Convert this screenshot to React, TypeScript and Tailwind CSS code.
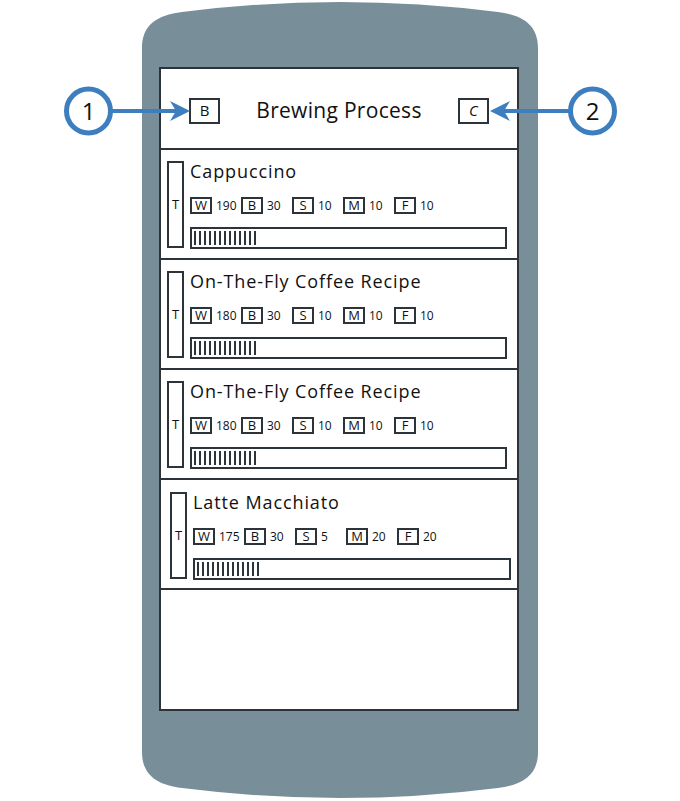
import React from "react";

type Recipe = {
  name: string;
  w: number;
  b: number;
  s: number;
  m: number;
  f: number;
};

const recipes: Recipe[] = [
  { name: "Cappuccino", w: 190, b: 30, s: 10, m: 10, f: 10 },
  { name: "On-The-Fly Coffee Recipe", w: 180, b: 30, s: 10, m: 10, f: 10 },
  { name: "On-The-Fly Coffee Recipe", w: 180, b: 30, s: 10, m: 10, f: 10 },
  { name: "Latte Macchiato", w: 175, b: 30, s: 5, m: 20, f: 20 },
];

const FONT = { fontFamily: '"Open Sans", "DejaVu Sans", sans-serif' };

function Chip({ label, value }: { label: string; value: number }) {
  return (
    <div className="flex w-[51px] items-center">
      <div className="flex h-[17px] w-[22px] items-center justify-center border-2 border-[#2c3439] text-[13px] leading-none text-[#111]">
        {label}
      </div>
      <span className="ml-[4px] text-[12px] leading-none text-[#111]">{value}</span>
    </div>
  );
}

function Row({ r, shift }: { r: Recipe; shift: boolean }) {
  return (
    <div
      className={
        "flex h-[110px] border-b-2 border-[#2c3439] " +
        (shift ? "pl-[9px] pr-[6px] pt-[12px]" : "pl-[6px] pr-[10px] pt-[11px]")
      }
    >
      <div className="flex h-[87px] w-[17px] items-center justify-center border-2 border-[#2c3439] text-[13px] text-[#111]">
        T
      </div>
      <div className="ml-[6px] flex flex-1 flex-col">
        <div className="h-[24px] text-[18px] leading-[20px] tracking-[0.9px] text-[#111]">{r.name}</div>
        <div className="mt-[12px] flex">
          <Chip label="W" value={r.w} />
          <Chip label="B" value={r.b} />
          <Chip label="S" value={r.s} />
          <Chip label="M" value={r.m} />
          <Chip label="F" value={r.f} />
        </div>
        <div className="mt-[13px] flex h-[22px] items-center gap-[3px] border-2 border-[#2c3439] pl-[2px]">
          {Array.from({ length: 13 }).map((_, i) => (
            <div key={i} className="h-[14px] w-[2px] bg-[#2c3439]" />
          ))}
        </div>
      </div>
    </div>
  );
}

export default function App() {
  return (
    <div className="relative h-[801px] w-[680px] overflow-hidden bg-white" style={FONT}>
      <div className="ml-[142px] flex h-[801px] w-[396px]">
        <div className="relative h-full w-full pl-[17px] pr-[19px] pt-[67px]">
          <svg
            className="absolute inset-0"
            width="396"
            height="801"
            viewBox="0 0 396 801"
          >
            <path
              d="M0,48 C0,25 15,15 40,12 Q198,-8 356,12 C381,15 396,25 396,48 L396,752 C396,775 381,785 356,788 Q198,808 40,788 C15,785 0,775 0,752 Z"
              fill="#788f9a"
            />
          </svg>
          <div className="relative flex h-[644px] flex-col border-2 border-[#2c3439] bg-white">
            <div className="flex h-[81px] items-center justify-between border-b-2 border-[#2c3439] px-[28px] pt-[4px]">
              <div className="flex h-[26px] w-[31px] items-center justify-center border-2 border-[#2c3439] text-[15px] text-[#111]">
                B
              </div>
              <div className="text-[21px] tracking-[0.3px] text-[#111]">Brewing Process</div>
              <div className="flex h-[26px] w-[31px] items-center justify-center border-2 border-[#2c3439] text-[15px] italic text-[#111]">
                C
              </div>
            </div>
            {recipes.map((r, i) => (
              <Row key={i} r={r} shift={i === 3} />
            ))}
          </div>
        </div>
      </div>

      <svg className="pointer-events-none absolute inset-0" width="680" height="801" viewBox="0 0 680 801">
        <line x1="112" y1="111" x2="178" y2="111" stroke="#3d7ebf" strokeWidth="4" />
        <path d="M190,111 L170,101 L176,111 L170,121 Z" fill="#3d7ebf" />
        <circle cx="88.5" cy="111" r="22" fill="white" stroke="#3d7ebf" strokeWidth="5" />
        <text x="88.5" y="119.5" textAnchor="middle" fontSize="24" fill="#111" style={FONT}>
          1
        </text>

        <line x1="569" y1="111" x2="502" y2="111" stroke="#3d7ebf" strokeWidth="4" />
        <path d="M490,111 L510,101 L504,111 L510,121 Z" fill="#3d7ebf" />
        <circle cx="592.5" cy="111" r="22" fill="white" stroke="#3d7ebf" strokeWidth="5" />
        <text x="592.5" y="119.5" textAnchor="middle" fontSize="24" fill="#111" style={FONT}>
          2
        </text>
      </svg>
    </div>
  );
}
